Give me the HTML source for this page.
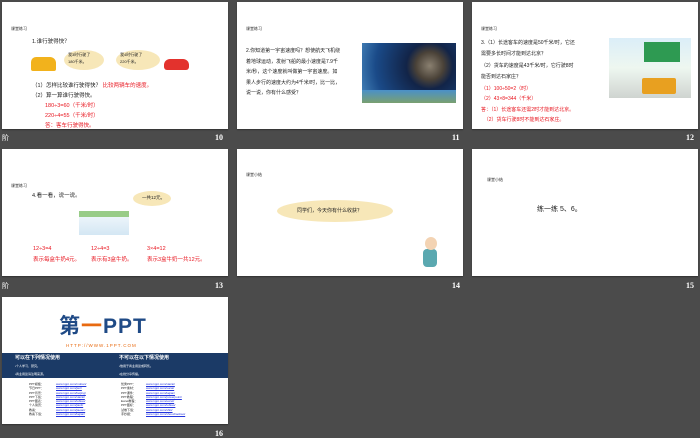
<!DOCTYPE html>
<html><head><meta charset="utf-8"><style>
*{margin:0;padding:0;box-sizing:border-box}
body{width:700px;height:438px;background:#4b4b4b;position:relative;overflow:hidden;font-family:"Liberation Sans","Noto Sans CJK SC",sans-serif}
.s{position:absolute;width:226px;height:127px;background:#fff;overflow:hidden;box-shadow:0 1px 1px #333}
.n{position:absolute;color:#fff;font:bold 8px "Liberation Serif",serif}
.t{position:absolute;font-size:4px;color:#222}
.a{position:absolute;font-size:5.5px;color:#222;white-space:nowrap;line-height:10px}
.r{color:#e8141e}
.cl{position:absolute;background:#f7e7b8;border-radius:50%}
</style></head><body>
<!-- slide 10 -->
<div class="s" style="left:2px;top:2px">
 <div class="t" style="left:9px;top:24px">课堂练习</div>
 <div class="a" style="left:30px;top:35px">1.谁行驶得快？</div>
 <div style="position:absolute;left:29px;top:55px;width:25px;height:14px;background:#f2b21c;border-radius:5px 6px 2px 2px"></div>
 <div class="cl" style="left:62px;top:48px;width:40px;height:20px"></div>
 <div class="a" style="left:66px;top:49px;font-size:4px;line-height:7px">我3时行驶了<br>180千米。</div>
 <div class="cl" style="left:114px;top:48px;width:44px;height:20px"></div>
 <div class="a" style="left:118px;top:49px;font-size:4px;line-height:7px">我4时行驶了<br>220千米。</div>
 <div style="position:absolute;left:162px;top:57px;width:25px;height:11px;background:#e3322d;border-radius:6px 6px 3px 3px"></div>
 <div class="a" style="left:30px;top:79px">（1）怎样比较谁行驶得快？ <span class="r">比较两辆车的速度。</span></div>
 <div class="a" style="left:30px;top:89px">（2）算一算谁行驶得快。</div>
 <div class="a r" style="left:43px;top:99px">180÷3=60（千米/时）<br>220÷4=55（千米/时）<br>答：客车行驶得快。</div>
</div>
<!-- slide 11 -->
<div class="s" style="left:237px;top:2px">
 <div class="t" style="left:9px;top:24px">课堂练习</div>
 <div class="a" style="left:9px;top:44px;font-size:5px;line-height:10.5px">2.你知道第一宇宙速度吗？想使航天飞机绕<br>着地球运动，发射飞船的最小速度是7.9千<br>米/秒，这个速度就叫做第一宇宙速度。如<br>果人步行的速度大约为4千米/时，比一比，<br>说一说，你有什么感受？</div>
 <div style="position:absolute;left:125px;top:41px;width:94px;height:60px;background:radial-gradient(circle at 72% 38%,#8a8070 0,#4a4238 18%,#122448 30%,#1a4a88 70%,#4a8ac0 100%)"></div>
 <div style="position:absolute;left:125px;top:88px;width:94px;height:13px;background:linear-gradient(#4a90c8,#7aa070)"></div>
</div>
<!-- slide 12 -->
<div class="s" style="left:472px;top:2px">
 <div class="t" style="left:9px;top:24px">课堂练习</div>
 <div class="a" style="left:9px;top:36px;font-size:5px;line-height:11.3px">3.（1）长途客车的速度是50千米/时，它还<br>需要多长时间才能到达北京？<br>（2）货车的速度是43千米/时，它行驶8时<br>能否到达石家庄？</div>
 <div class="a r" style="left:9px;top:82px;font-size:5px;line-height:10.3px">（1）100÷50=2（时）<br>（2）43×8=344（千米）<br>答：（1）长途客车还需2时才能到达北京。<br>&nbsp;&nbsp;（2）货车行驶8时不能到达石家庄。</div>
 <div style="position:absolute;left:137px;top:36px;width:82px;height:60px;background:linear-gradient(#dbeef8,#eef7f0 50%,#cfd4d0)"></div>
 <div style="position:absolute;left:172px;top:40px;width:36px;height:20px;background:#2e9a52"></div>
 <div style="position:absolute;left:170px;top:76px;width:34px;height:16px;background:#e8a020;border-radius:2px"></div>
</div>
<!-- slide 13 -->
<div class="s" style="left:2px;top:149px">
 <div class="t" style="left:9px;top:34px">课堂练习</div>
 <div class="a" style="left:30px;top:42px">4.看一看，说一说。</div>
 <div class="cl" style="left:131px;top:42px;width:38px;height:15px"></div>
 <div class="a" style="left:140px;top:44px;font-size:4.5px">一共12元。</div>
 <div style="position:absolute;left:77px;top:62px;width:50px;height:24px;background:linear-gradient(#8cc67a 0,#8cc67a 25%,#eaf3fa 25%,#cfe4f2);opacity:.9"></div>
 <div class="a r" style="left:31px;top:95px;line-height:11px">12÷3=4<br>表示每盒牛奶4元。</div>
 <div class="a r" style="left:89px;top:95px;line-height:11px">12÷4=3<br>表示有3盒牛奶。</div>
 <div class="a r" style="left:145px;top:95px;line-height:11px">3×4=12<br>表示3盒牛奶一共12元。</div>
</div>
<!-- slide 14 -->
<div class="s" style="left:237px;top:149px">
 <div class="t" style="left:9px;top:23px">课堂小结</div>
 <div class="cl" style="left:40px;top:51px;width:116px;height:22px"></div>
 <div class="a" style="left:60px;top:57px;font-size:5px">同学们，今天你有什么收获？</div>
 <div style="position:absolute;left:186px;top:100px;width:14px;height:18px;background:#5aa8b0;border-radius:4px"></div>
 <div style="position:absolute;left:188px;top:88px;width:12px;height:13px;background:#f3d3b3;border-radius:50%"></div>
</div>
<!-- slide 15 -->
<div class="s" style="left:472px;top:149px">
 <div class="t" style="left:15px;top:28px">课堂小结</div>
 <div class="a" style="left:65px;top:56px;font-size:7px">练一练 5、6。</div>
</div>
<!-- slide 16 -->
<div class="s" style="left:2px;top:297px">
 <div style="position:absolute;left:57px;top:18px;font:bold 21px 'Liberation Sans','Noto Sans CJK SC',sans-serif;color:#1f4a86;letter-spacing:1px;line-height:24px">第<span style="color:#e86a10">一</span>PPT</div>
 <div style="position:absolute;left:64px;top:46px;font-size:4.5px;color:#e86a10;letter-spacing:1px">HTTP://WWW.1PPT.COM</div>
 <div style="position:absolute;left:0;top:56px;width:226px;height:25px;background:#1b3a66"></div>
 <div class="a" style="left:13px;top:57px;color:#fff;font-size:5px;font-weight:bold;line-height:8px">可以在下列情况使用<br><span style="font-size:3px;font-weight:normal">•个人学习、研究。<br>•商业用途请注明来源。</span></div>
 <div class="a" style="left:117px;top:57px;color:#fff;font-size:5px;font-weight:bold;line-height:8px">不可以在以下情况使用<br><span style="font-size:3px;font-weight:normal">•他用于商业用途或转售。<br>•在线分享传播。</span></div>
 <div class="a" style="left:27px;top:85px;font-size:3px;line-height:4.3px">PPT模板：<br>节日PPT：<br>PPT背景：<br>PPT下载：<br>PPT图表：<br>个人简历：<br>教案：<br>教案下载：</div>
 <div class="a" style="left:54px;top:85px;font-size:3px;line-height:4.3px;color:#2233dd;text-decoration:underline">www.1ppt.com/moban/<br>www.1ppt.com/jieri/<br>www.1ppt.com/beijing/<br>www.1ppt.com/xiazai/<br>www.1ppt.com/tubiao/<br>www.1ppt.com/jianli/<br>www.1ppt.com/jiaoan/<br>www.1ppt.com/kejian/</div>
 <div class="a" style="left:119px;top:85px;font-size:3px;line-height:4.3px">优秀PPT：<br>PPT素材：<br>PPT课件：<br>PPT教程：<br>Excel教程：<br>PPT图标：<br>试卷下载：<br>手抄报：</div>
 <div class="a" style="left:144px;top:85px;font-size:3px;line-height:4.3px;color:#2233dd;text-decoration:underline">www.1ppt.com/xiazai/<br>www.1ppt.com/sucai/<br>www.1ppt.com/kejian/<br>www.1ppt.com/powerpoint/<br>www.1ppt.com/excel/<br>www.1ppt.com/tubiao/<br>www.1ppt.com/shiti/<br>www.1ppt.com/shouchaobao/</div>
</div>
<div class="n" style="left:2px;top:133px;font-weight:normal;font-size:7px">阶</div>
<div class="n" style="left:215px;top:133px">10</div>
<div class="n" style="left:452px;top:133px">11</div>
<div class="n" style="left:686px;top:133px">12</div>
<div class="n" style="left:2px;top:281px;font-weight:normal;font-size:7px">阶</div>
<div class="n" style="left:215px;top:281px">13</div>
<div class="n" style="left:452px;top:281px">14</div>
<div class="n" style="left:686px;top:281px">15</div>
<div class="n" style="left:215px;top:429px">16</div>
</body></html>
